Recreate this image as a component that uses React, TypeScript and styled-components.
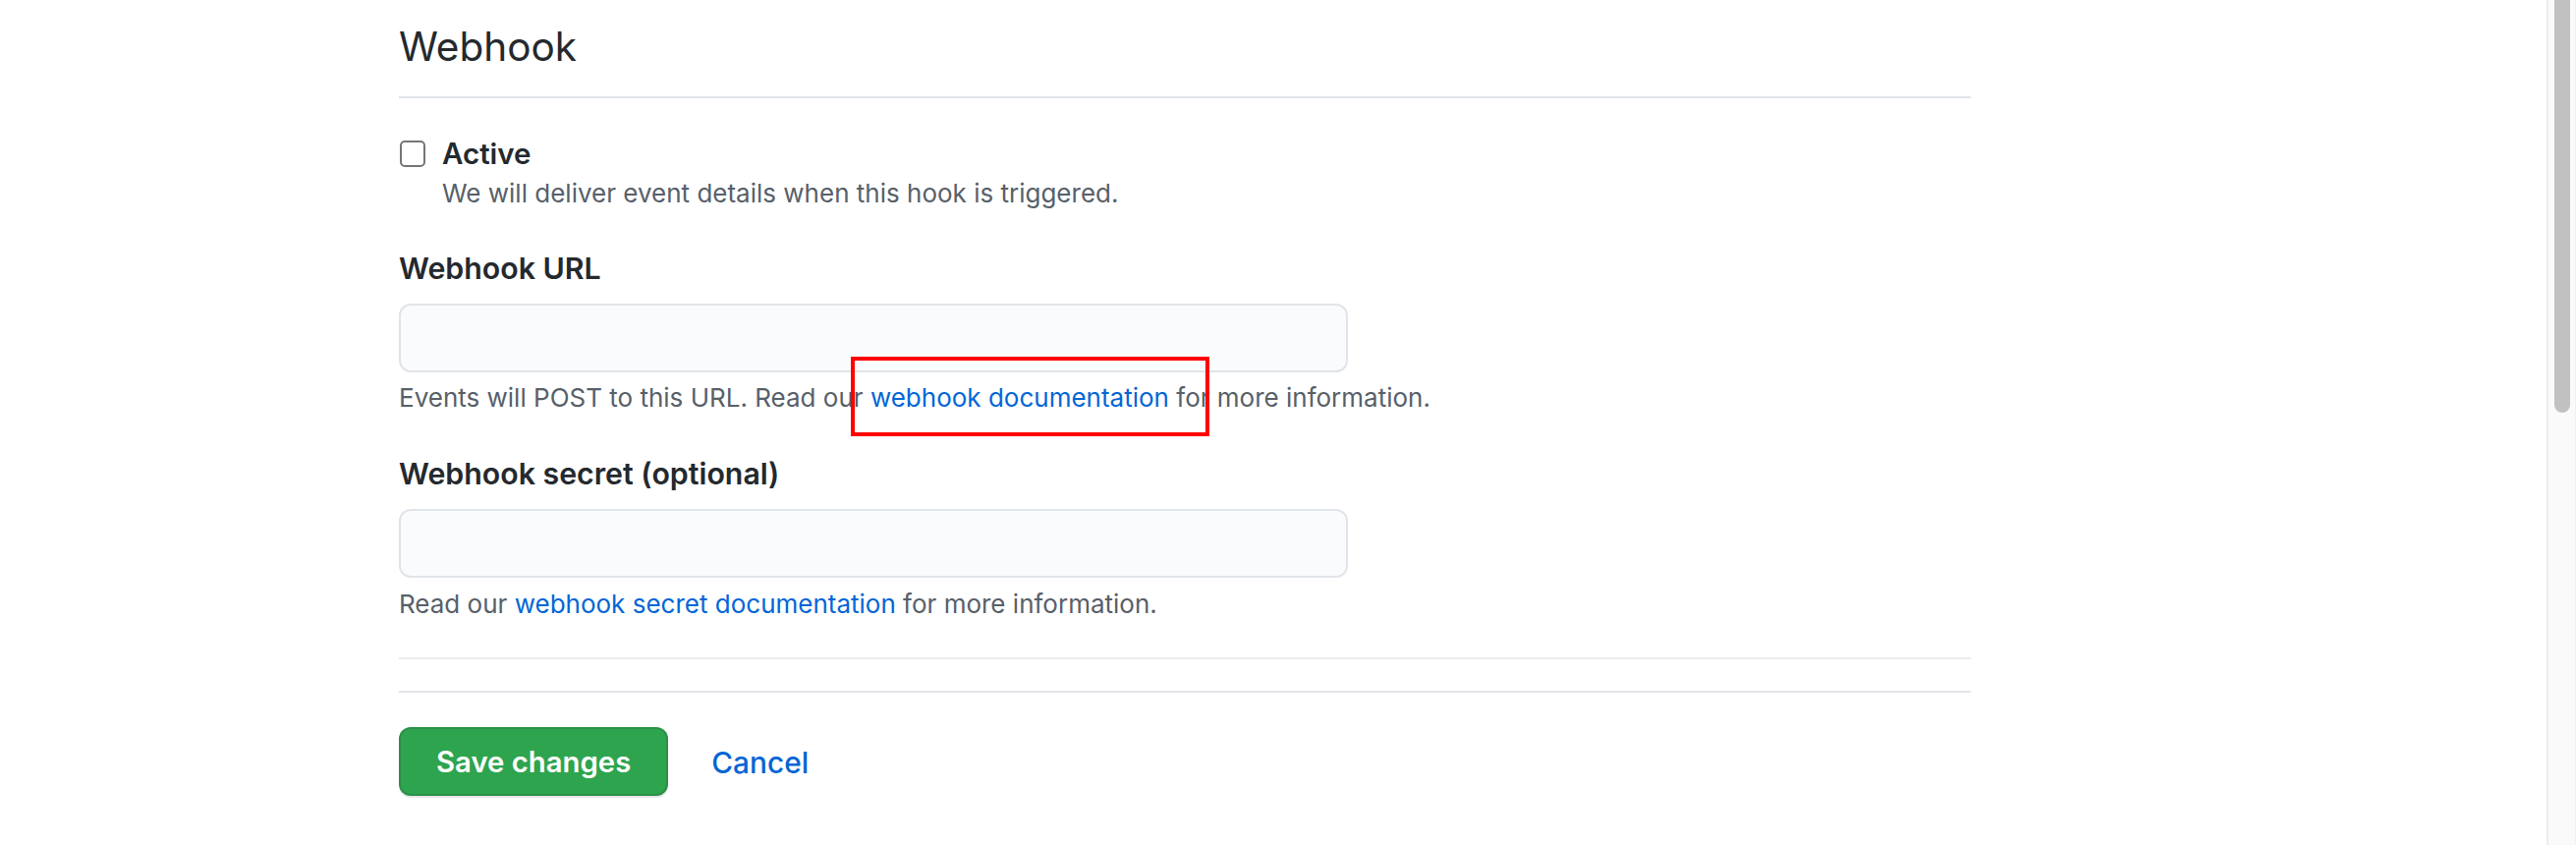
import React from 'react'
import styled, { createGlobalStyle } from 'styled-components'

const GlobalStyle = createGlobalStyle`
  html, body {
    margin: 0;
    padding: 0;
    background: #ffffff;
  }
  body {
    font-family: Inter, "Noto Sans", "Liberation Sans", sans-serif;
    color: #24292e;
  }
`

const Viewport = styled.div`
  display: flex;
  width: 2622px;
  height: 860px;
  overflow: hidden;
`

const Main = styled.main`
  position: relative;
  flex: 1;
  padding-left: 406px;
`

const Form = styled.form`
  width: 1600px;
  display: flex;
  flex-direction: column;
`

const Subhead = styled.div`
  padding-top: 18px;
  padding-bottom: 20px;
  border-bottom: 2px solid #e1e4e8;
`

const SubheadTitle = styled.h2`
  margin: 0;
  font-size: 40.5px;
  line-height: 60px;
  font-weight: 400;
  color: #24292e;
`

const CheckRow = styled.div`
  display: grid;
  grid-template-columns: 26px 1fr;
  column-gap: 18px;
  margin-top: 38px;
`

const Checkbox = styled.input`
  appearance: none;
  margin: 5px 0 0 1px;
  width: 26px;
  height: 27px;
  border: 2px solid #767676;
  border-radius: 5px;
  background: #fff;
  box-sizing: border-box;
`

const CheckText = styled.div`
  display: flex;
  flex-direction: column;
  gap: 7px;
`

const CheckLabel = styled.label`
  font-size: 29.5px;
  line-height: 36px;
  font-weight: 600;
  color: #24292e;
`

const Note = styled.p<{ $gap?: number }>`
  margin: ${p => p.$gap ?? 0}px 0 0;
  font-size: 26px;
  line-height: 32px;
  color: #586069;
`

const FieldGroup = styled.div<{ $top: number }>`
  display: flex;
  flex-direction: column;
  margin-top: ${p => p.$top}px;
`

const FieldLabel = styled.label`
  font-size: 30.3px;
  line-height: 40px;
  font-weight: 600;
  color: #24292e;
`

const TextInput = styled.input`
  margin-top: 16px;
  width: 966px;
  height: 70px;
  box-sizing: border-box;
  border: 2px solid #e1e4e8;
  border-radius: 12px;
  background: #fafbfc;
  padding: 0 24px;
  font-size: 28px;
  font-family: inherit;
  outline: none;
`

const Rule = styled.hr<{ $tone: string; $top: number }>`
  margin: ${p => p.$top}px 0 0;
  border: 0;
  height: 2px;
  background: ${p => p.$tone};
`

const Actions = styled.div`
  display: flex;
  align-items: center;
  gap: 44px;
  margin-top: 35px;
`

const PrimaryButton = styled.button`
  height: 70px;
  padding: 0 36px;
  border: 2px solid rgba(27, 31, 35, 0.15);
  border-radius: 12px;
  background: #2ea44f;
  box-shadow: 0 2px 0 rgba(27, 31, 35, 0.1);
  color: #fff;
  font-family: inherit;
  font-size: 29.3px;
  font-weight: 600;
`

const TextLink = styled.a`
  color: #0366d6;
  text-decoration: none;
`

const CancelLink = styled(TextLink)`
  font-size: 29.8px;
  font-weight: 500;
  padding-top: 2px;
`

const Highlight = styled.div`
  position: absolute;
  left: 866px;
  top: 363px;
  width: 365px;
  height: 81px;
  box-sizing: border-box;
  border: 4px solid #ff0000;
  pointer-events: none;
`

const ScrollRail = styled.div`
  width: 30px;
  flex-shrink: 0;
  background: #fafafa;
  border-left: 2px solid #ececec;
  border-right: 1px solid #f0f0f0;
  box-sizing: border-box;
  display: flex;
  justify-content: center;
`

const ScrollThumb = styled.div`
  width: 16px;
  height: 420px;
  background: #c1c1c1;
  border-radius: 0 0 8px 8px;
`

export default function App() {
  return (
    <>
      <GlobalStyle />
      <Viewport>
        <Main>
          <Form onSubmit={e => e.preventDefault()}>
            <Subhead>
              <SubheadTitle>Webhook</SubheadTitle>
            </Subhead>

            <CheckRow>
              <Checkbox type="checkbox" id="hook-active" />
              <CheckText>
                <CheckLabel htmlFor="hook-active">Active</CheckLabel>
                <Note>We will deliver event details when this hook is triggered.</Note>
              </CheckText>
            </CheckRow>

            <FieldGroup $top={40}>
              <FieldLabel htmlFor="hook-url">Webhook URL</FieldLabel>
              <TextInput id="hook-url" type="text" />
              <Note $gap={10}>
                Events will POST to this URL. Read our{' '}
                <TextLink href="#">webhook documentation</TextLink> for more information.
              </Note>
            </FieldGroup>

            <FieldGroup $top={41}>
              <FieldLabel htmlFor="hook-secret">Webhook secret (optional)</FieldLabel>
              <TextInput id="hook-secret" type="text" />
              <Note $gap={11}>
                Read our <TextLink href="#">webhook secret documentation</TextLink> for more
                information.
              </Note>
            </FieldGroup>

            <Rule $tone="#eaecef" $top={38} />
            <Rule $tone="#e1e4e8" $top={32} />

            <Actions>
              <PrimaryButton type="submit">Save changes</PrimaryButton>
              <CancelLink href="#">Cancel</CancelLink>
            </Actions>
          </Form>
          <Highlight />
        </Main>
        <ScrollRail>
          <ScrollThumb />
        </ScrollRail>
      </Viewport>
    </>
  )
}
